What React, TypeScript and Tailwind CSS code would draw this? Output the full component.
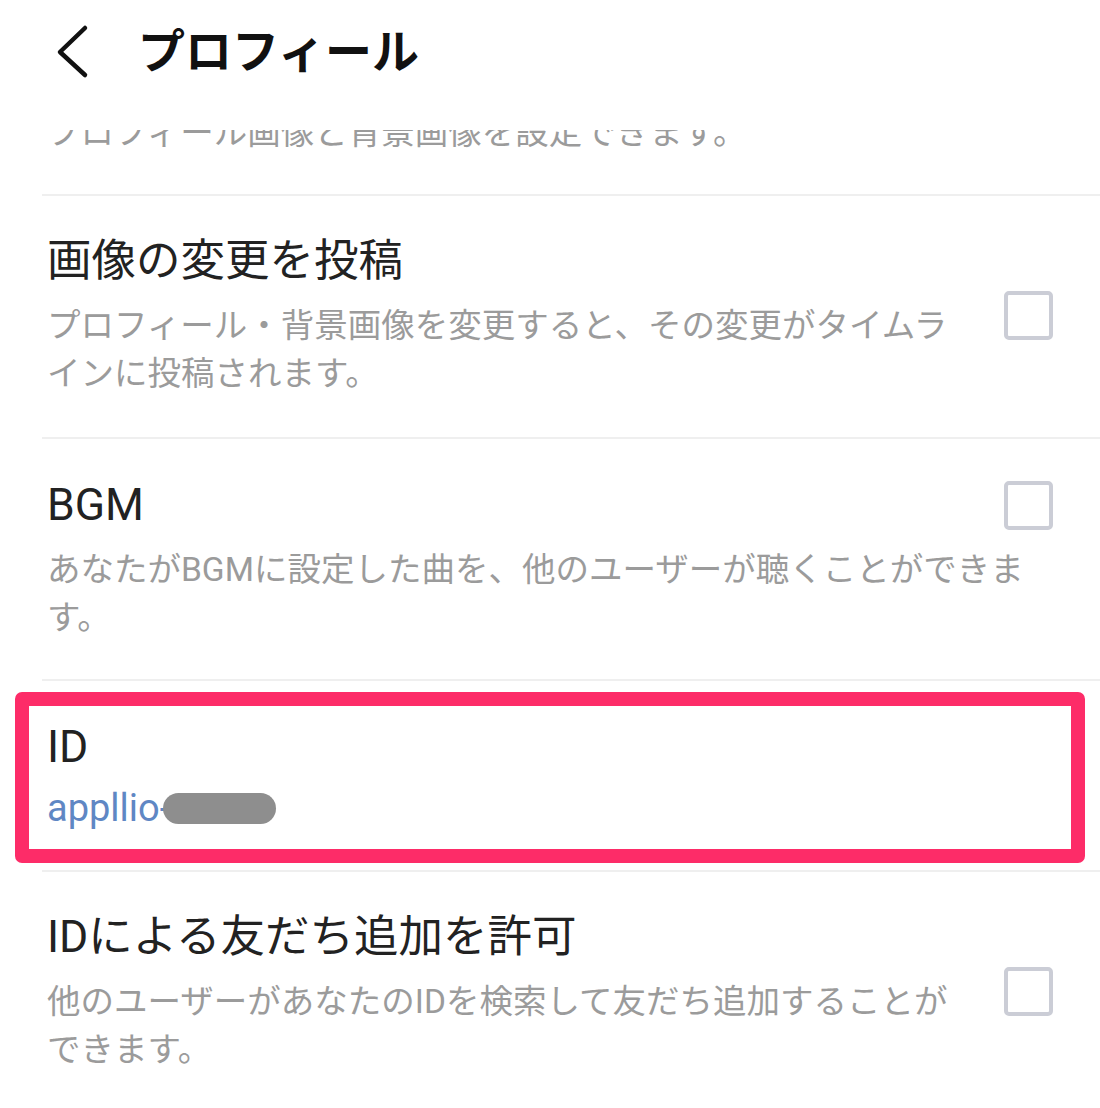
import React from 'react';

const font = { fontFamily: 'Roboto, "Noto Sans CJK JP", sans-serif' };

const Checkbox: React.FC = () => (
  <div className="h-[49px] w-[49px] shrink-0 rounded-[5px] border-[4px] border-[#cbcdd6] bg-white" />
);

const Divider: React.FC = () => <div className="ml-[42px] h-[2px] bg-[#efefef]" />;

interface RowProps {
  title: string;
  lines: string[];
}

// checkbox sits beside the whole text block
const SideRow: React.FC<RowProps> = ({ title, lines }) => (
  <div className="flex items-center pl-[47px] pr-[47px] pt-[37px] pb-[39px]">
    <div className="flex-1">
      <div className="text-[44.5px] leading-[56px] text-[#222222]">{title}</div>
      <div className="mt-[13px] text-[33.5px] leading-[48px] text-[#9b9b9b]">
        {lines.map((l, i) => (
          <div key={i} className="whitespace-nowrap">{l}</div>
        ))}
      </div>
    </div>
    <Checkbox />
  </div>
);

// checkbox sits on the title line, description spans the full width
const TopRow: React.FC<RowProps> = ({ title, lines }) => (
  <div className="pl-[47px] pr-[47px] pt-[38px] pb-[37px]">
    <div className="flex items-center justify-between">
      <div className="text-[44.5px] leading-[56px] text-[#222222]">{title}</div>
      <Checkbox />
    </div>
    <div className="mt-[13px] text-[33.5px] leading-[48px] text-[#9b9b9b]">
      {lines.map((l, i) => (
        <div key={i} className="whitespace-nowrap">{l}</div>
      ))}
    </div>
  </div>
);

export default function App() {
  return (
    <div className="h-[1108px] w-[1100px] overflow-hidden bg-white" style={font}>
      {/* header */}
      <div className="h-[130px] pt-[24px]">
        <div className="flex h-[56px] items-center pl-[52px]">
          <svg width="40" height="56" viewBox="0 0 40 56" fill="none">
            <path d="M33 4 L8 28 L33 51" stroke="#111111" strokeWidth="4.5" strokeLinecap="round" strokeLinejoin="round" />
          </svg>
          <div className="ml-[46px] text-[47px] font-bold leading-[56px] text-[#111111]">プロフィール</div>
        </div>
      </div>

      {/* previous row, scrolled under the header */}
      <div className="h-[64px] overflow-hidden pl-[47px]">
        <div className="-mt-[21px] whitespace-nowrap text-[33.5px] leading-[48px] text-[#9b9b9b]">
          プロフィール画像と背景画像を設定できます。
        </div>
      </div>
      <Divider />

      <SideRow
        title="画像の変更を投稿"
        lines={['プロフィール・背景画像を変更すると、その変更がタイムラ', 'インに投稿されます。']}
      />
      <Divider />

      <TopRow
        title="BGM"
        lines={['あなたがBGMに設定した曲を、他のユーザーが聴くことができま', 'す。']}
      />
      <Divider />

      {/* ID row with highlight */}
      <div className="px-[15px] pt-[11px] pb-[7px]">
        <div className="rounded-[7px] border-[14px] border-[#fd2c68] pl-[18px] pt-[13px] pb-[17px]">
          <div className="text-[44.5px] leading-[56px] text-[#222222]">ID</div>
          <div className="mt-[9px] flex h-[48px] items-center">
            <span className="text-[38px] leading-[48px] text-[#5f87c4]">appllio-</span>
            <span className="-ml-[7px] h-[31px] w-[113px] rounded-full bg-[#8e8e8e]" />
          </div>
        </div>
      </div>
      <Divider />

      <SideRow
        title="IDによる友だち追加を許可"
        lines={['他のユーザーがあなたのIDを検索して友だち追加することが', 'できます。']}
      />
    </div>
  );
}
